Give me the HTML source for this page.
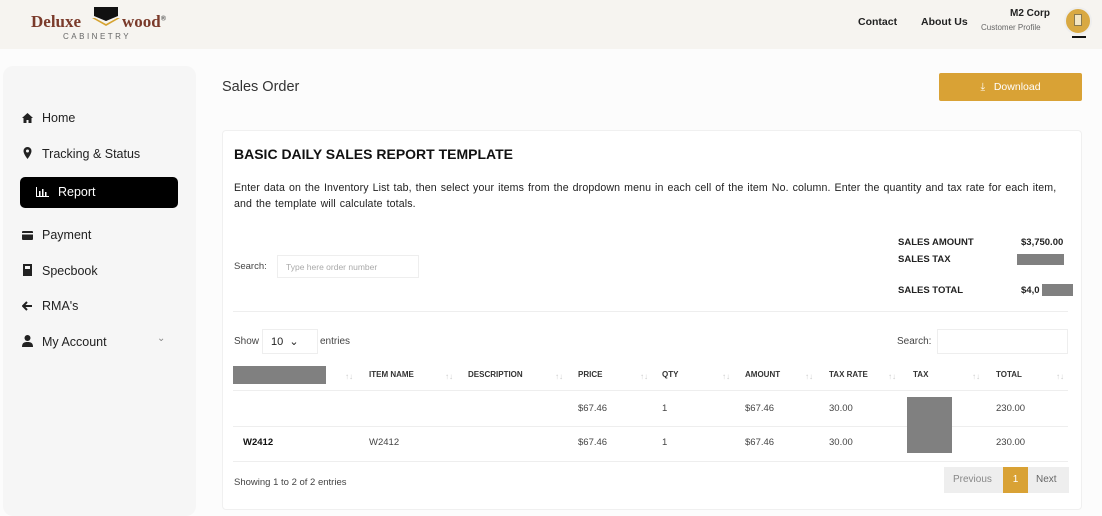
<!DOCTYPE html>
<html><head><meta charset="utf-8"><style>
*{margin:0;padding:0;box-sizing:border-box}
body{width:1102px;height:500px;overflow:hidden;background:#fcfcfc;font-family:"Liberation Sans",sans-serif;color:#222;position:relative}
.hdr{position:absolute;left:0;top:0;width:1102px;height:49px;background:#f6f4f0}
.abs{position:absolute;white-space:nowrap}
.side{position:absolute;left:3px;top:66px;width:193px;height:450px;background:#f6f6f6;border-radius:10px}
.nav{position:absolute;left:22px;font-size:12.5px;color:#222}
.nav svg{vertical-align:-1px;margin-right:9px}
.card{position:absolute;left:222px;top:130px;width:860px;height:380px;background:#fff;border:1px solid #f0f0f0;border-radius:4px}
.th{position:absolute;top:370px;font-size:8px;font-weight:bold;color:#333}
.td{position:absolute;font-size:9.5px;color:#444}
.so{position:absolute;top:372px;font-size:8px;color:#ccc}
.gray{position:absolute;background:#808080}
.line{position:absolute;left:233px;width:835px;height:1px;background:#eee}
</style></head><body>
<div class="hdr"></div>
<div class="abs" style="left:31px;top:12px;font-family:'Liberation Serif',serif;font-size:17px;font-weight:bold;color:#7a3a2a">Deluxe</div>
<svg class="abs" style="left:90px;top:5px" width="32" height="24"><path d="M4 2h24v9l-12 5-12-5z" fill="#111"/><path d="M2 13l14 8 14-8-3 0-11 6-11-6z" fill="#d6a331"/></svg>
<div class="abs" style="left:122px;top:12px;font-family:'Liberation Serif',serif;font-size:17px;font-weight:bold;color:#7a3a2a">wood<sup style="font-size:7px;color:#333">®</sup></div>
<div class="abs" style="left:63px;top:32px;font-size:8px;letter-spacing:2.5px;color:#666">CABINETRY</div>
<div class="abs" style="left:858px;top:16px;font-size:10.5px;font-weight:bold">Contact</div>
<div class="abs" style="left:921px;top:16px;font-size:10.5px;font-weight:bold">About Us</div>
<div class="abs" style="left:1010px;top:8px;font-size:10px;font-weight:bold">M2 Corp</div>
<div class="abs" style="left:981px;top:23px;font-size:8px;color:#666">Customer Profile</div>
<div class="abs" style="left:1064px;top:7px;width:28px;height:28px;border-radius:50%;background:#d9a942;border:2px solid #eee"></div>
<div class="abs" style="left:1074px;top:14px;width:8px;height:12px;background:#f3e6c4;border:1px solid #8a7a50"></div>
<div class="abs" style="left:1072px;top:36px;width:14px;height:2px;background:#111"></div>

<div class="side"></div>
<div class="nav" style="top:111px"><svg width="11" height="10"><path d="M5.5 0L0 5h1.5v5h3V7h2v3h3V5H11z" fill="#222"/></svg>Home</div>
<div class="nav" style="top:147px"><svg width="11" height="12"><path d="M5.5 0a4 4 0 0 0-4 4c0 3 4 8 4 8s4-5 4-8a4 4 0 0 0-4-4zm0 2.5a1.5 1.5 0 1 1 0 3 1.5 1.5 0 0 1 0-3z" fill="#222"/></svg>Tracking &amp; Status</div>
<div class="abs" style="left:20px;top:177px;width:158px;height:31px;background:#000;border-radius:5px"></div>
<div class="nav" style="left:36px;top:185px;color:#fff"><svg width="13" height="10"><path d="M0 0v10h13V9H1V0zM3 4h1.5v5H3zM6 2h1.5v7H6zM9 5h1.5v4H9z" fill="#fff"/></svg>Report</div>
<div class="nav" style="top:228px"><svg width="11" height="9"><rect y="0" width="11" height="9" rx="1" fill="#222"/><rect y="2" width="11" height="1.5" fill="#f6f6f6"/></svg>Payment</div>
<div class="nav" style="top:264px"><svg width="11" height="12"><rect x="1" width="9" height="12" fill="#222"/><rect x="3" y="2" width="5" height="3" fill="#f6f6f6"/></svg>Specbook</div>
<div class="nav" style="top:299px"><svg width="11" height="10"><path d="M5 1L1 5l4 4M1 5h9" stroke="#222" stroke-width="2" fill="none"/></svg>RMA's</div>
<div class="nav" style="top:335px"><svg width="11" height="12"><circle cx="5.5" cy="3" r="3" fill="#222"/><path d="M0 12c0-4 2-5 5.5-5s5.5 1 5.5 5z" fill="#222"/></svg>My Account</div>
<div class="abs" style="left:157px;top:333px;font-size:10px;color:#888">⌄</div>

<div class="abs" style="left:222px;top:79px;font-size:14.5px;color:#333">Sales Order</div>
<div class="abs" style="left:939px;top:73px;width:143px;height:28px;background:#d9a235;border-radius:2px;color:#fff;font-size:10.5px;text-align:center;line-height:28px">⤓&nbsp;&nbsp; Download</div>

<div class="card"></div>
<div class="abs" style="left:234px;top:146px;font-size:14px;font-weight:bold;color:#111">BASIC DAILY SALES REPORT TEMPLATE</div>
<div class="abs" style="left:234px;top:180px;font-size:10.6px;line-height:16px;color:#222;letter-spacing:0.12px;word-spacing:0.9px">Enter data on the Inventory List tab, then select your items from the dropdown menu in each cell of the item No. column. Enter the quantity and tax rate for each item,<br>and the template will calculate totals.</div>
<div class="abs" style="left:234px;top:261px;font-size:9.5px;color:#444">Search:</div>
<div class="abs" style="left:277px;top:255px;width:142px;height:23px;border:1px solid #eee;font-size:8.5px;color:#aaa;padding:6px 8px">Type here order number</div>
<div class="abs" style="left:898px;top:237px;font-size:9.5px;font-weight:bold">SALES AMOUNT</div>
<div class="abs" style="left:1021px;top:237px;font-size:9.5px;font-weight:bold">$3,750.00</div>
<div class="abs" style="left:898px;top:254px;font-size:9.5px;font-weight:bold">SALES TAX</div>
<div class="gray" style="left:1017px;top:254px;width:47px;height:11px"></div>
<div class="abs" style="left:898px;top:285px;font-size:9.5px;font-weight:bold">SALES TOTAL</div>
<div class="abs" style="left:1021px;top:285px;font-size:9.5px;font-weight:bold">$4,0</div>
<div class="gray" style="left:1042px;top:284px;width:31px;height:12px"></div>
<div class="line" style="top:311px"></div>

<div class="abs" style="left:234px;top:336px;font-size:10px;color:#444">Show</div>
<div class="abs" style="left:262px;top:329px;width:56px;height:25px;border:1px solid #eee;font-size:11px;padding:5px 8px">10 &nbsp;⌄</div>
<div class="abs" style="left:320px;top:336px;font-size:10px;color:#444">entries</div>
<div class="abs" style="left:897px;top:336px;font-size:10px;color:#444">Search:</div>
<div class="abs" style="left:937px;top:329px;width:131px;height:25px;border:1px solid #eee"></div>

<div class="gray" style="left:233px;top:366px;width:93px;height:18px"></div>
<div class="th" style="left:369px">ITEM NAME</div>
<div class="th" style="left:468px">DESCRIPTION</div>
<div class="th" style="left:578px">PRICE</div>
<div class="th" style="left:662px">QTY</div>
<div class="th" style="left:745px">AMOUNT</div>
<div class="th" style="left:829px">TAX RATE</div>
<div class="th" style="left:913px">TAX</div>
<div class="th" style="left:996px">TOTAL</div>
<div class="so" style="left:345px">↑↓</div><div class="so" style="left:445px">↑↓</div><div class="so" style="left:555px">↑↓</div><div class="so" style="left:640px">↑↓</div><div class="so" style="left:722px">↑↓</div><div class="so" style="left:805px">↑↓</div><div class="so" style="left:888px">↑↓</div><div class="so" style="left:972px">↑↓</div><div class="so" style="left:1056px">↑↓</div>
<div class="line" style="top:390px"></div>
<div class="td" style="left:578px;top:403px">$67.46</div><div class="td" style="left:662px;top:403px">1</div><div class="td" style="left:745px;top:403px">$67.46</div><div class="td" style="left:829px;top:403px">30.00</div><div class="td" style="left:996px;top:403px">230.00</div>
<div class="line" style="top:426px"></div>
<div class="td" style="left:243px;top:437px;font-weight:bold;color:#111">W2412</div><div class="td" style="left:369px;top:437px">W2412</div>
<div class="td" style="left:578px;top:437px">$67.46</div><div class="td" style="left:662px;top:437px">1</div><div class="td" style="left:745px;top:437px">$67.46</div><div class="td" style="left:829px;top:437px">30.00</div><div class="td" style="left:996px;top:437px">230.00</div>
<div class="gray" style="left:907px;top:397px;width:45px;height:56px"></div>
<div class="line" style="top:461px"></div>
<div class="abs" style="left:234px;top:477px;font-size:9.5px;color:#444">Showing 1 to 2 of 2 entries</div>
<div class="abs" style="left:944px;top:467px;width:125px;height:26px;background:#eee"></div>
<div class="abs" style="left:953px;top:474px;font-size:10px;color:#888">Previous</div>
<div class="abs" style="left:1003px;top:467px;width:25px;height:26px;background:#d9a235;color:#fff;font-size:10px;text-align:center;line-height:26px">1</div>
<div class="abs" style="left:1036px;top:474px;font-size:10px;color:#666">Next</div>
</body></html>
